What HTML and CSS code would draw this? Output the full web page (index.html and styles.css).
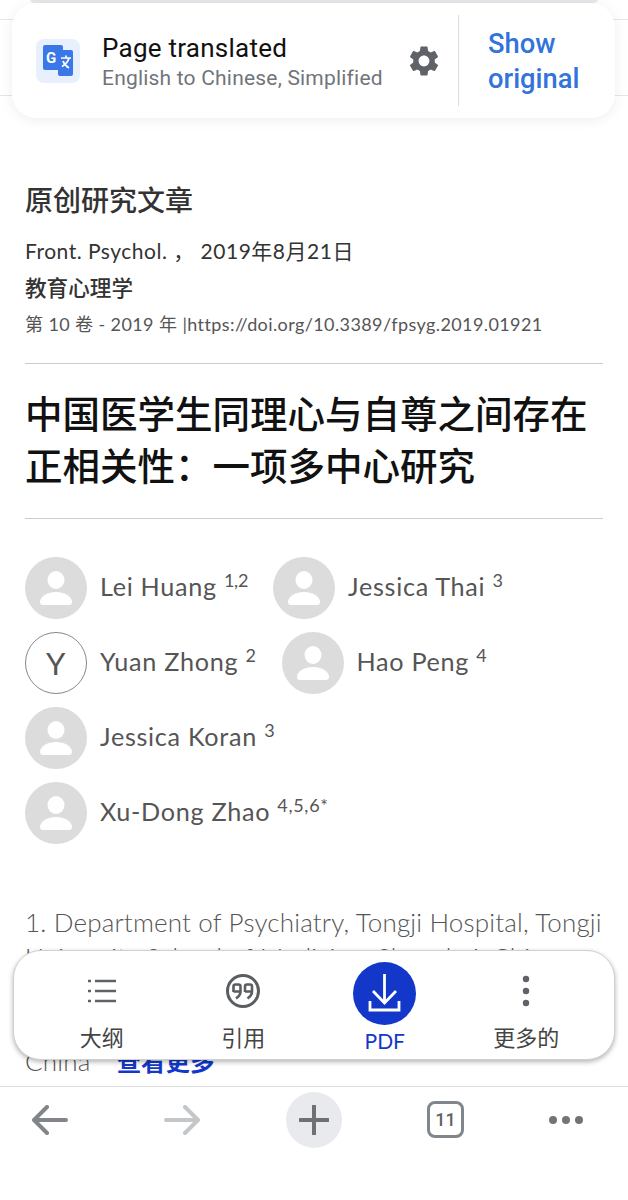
FILE: index.html
```html
<!DOCTYPE html>
<html lang="zh-CN">
<head>
    <meta charset="UTF-8">
    <meta name="viewport" content="width=device-width, initial-scale=1.0">
    <title>原创研究文章</title>
    <link rel="stylesheet" href="styles.css">
</head>
<body>
    <div class="page">
        <main class="article">
            <h2 class="kind">原创研究文章</h2>
            <p class="journal">Front. Psychol. ， 2019年8月21日</p>
            <p class="section">教育心理学</p>
            <p class="volume">第 10 卷 - 2019 年 |<a href="#">https://doi.org/10.3389/fpsyg.2019.01921</a></p>

            <h1 class="title">中国医学生同理心与自尊之间存在正相关性：一项多中心研究</h1>

            <ul class="authors">
                <li class="author">
                    <svg class="avatar" viewBox="0 0 62 62"><use href="#person"/></svg>
                    <span>Lei Huang <sup class="tight">1,2</sup></span>
                </li>
                <li class="author">
                    <svg class="avatar" viewBox="0 0 62 62"><use href="#person"/></svg>
                    <span>Jessica Thai <sup>3</sup></span>
                </li>
                <li class="author">
                    <div class="avatar initial">Y</div>
                    <span>Yuan Zhong <sup>2</sup></span>
                </li>
                <li class="author">
                    <svg class="avatar" viewBox="0 0 62 62"><use href="#person"/></svg>
                    <span>Hao Peng <sup>4</sup></span>
                </li>
                <li class="author">
                    <svg class="avatar" viewBox="0 0 62 62"><use href="#person"/></svg>
                    <span>Jessica Koran <sup>3</sup></span>
                </li>
                <li class="author">
                    <svg class="avatar" viewBox="0 0 62 62"><use href="#person"/></svg>
                    <span>Xu-Dong Zhao <sup>4,5,6*</sup></span>
                </li>
            </ul>

            <p class="affil">1. Department of Psychiatry, Tongji Hospital, Tongji<br>University School of Medicine, Shanghai, China<br><br><br>China <a class="more" href="#">查看更多</a></p>
        </main>

        <nav class="browser-bar">
            <svg class="bar-icon back" width="36" height="30" viewBox="0 0 36 30"><path d="M34 15H3M15 2 2 15l13 13" fill="none" stroke="#80868b" stroke-width="4" stroke-linecap="round" stroke-linejoin="round"/></svg>
            <svg class="bar-icon" width="36" height="30" viewBox="0 0 36 30"><path d="M2 15h31M21 2l13 13-13 13" fill="none" stroke="#c4c7c9" stroke-width="4" stroke-linecap="round" stroke-linejoin="round"/></svg>
            <div class="new-tab">
                <svg width="30" height="30" viewBox="0 0 30 30"><path d="M15 1v28M1 15h28" fill="none" stroke="#6d7175" stroke-width="4" stroke-linecap="round"/></svg>
            </div>
            <div class="tab-count">11</div>
            <div class="dots"><i></i><i></i><i></i></div>
        </nav>

        <div class="behind-bar"></div>
        <div class="behind-box"></div>

        <section class="translate-card">
            <svg class="translate-icon" width="44" height="44" viewBox="0 0 44 44">
                <rect x="7" y="6" width="20" height="25" rx="2" fill="#3b78e7"/>
                <rect x="22" y="11" width="15" height="26" rx="2" fill="#3b78e7"/>
                <path d="M25 19h10M30 16.500v2.500M33 19c-1 4-3.500 6.500-7 8.500M27 22c1 3 3.500 5.500 6 7" fill="none" stroke="#fff" stroke-width="1.700"/>
                <text class="translate-g" x="10" y="24">G</text>
            </svg>
            <div class="translate-text">
                <div class="translate-title">Page translated</div>
                <div class="translate-sub">English to Chinese, Simplified</div>
            </div>
            <svg class="gear" width="36" height="36" viewBox="0 0 24 24"><path fill="#5f6368" d="M19.14 12.94c.04-.3.06-.61.06-.94 0-.32-.02-.64-.07-.94l2.03-1.58c.18-.14.23-.41.12-.61l-1.92-3.32c-.12-.22-.37-.29-.59-.22l-2.39.96c-.5-.38-1.03-.7-1.62-.94l-.36-2.54c-.04-.24-.24-.41-.48-.41h-3.84c-.24 0-.43.17-.47.41l-.36 2.54c-.59.24-1.13.57-1.62.94l-2.39-.96c-.22-.08-.47 0-.59.22L2.74 8.87c-.12.21-.08.47.12.61l2.03 1.58c-.05.3-.09.63-.09.94s.02.64.07.94l-2.03 1.58c-.18.14-.23.41-.12.61l1.92 3.32c.12.22.37.29.59.22l2.39-.96c.5.38 1.03.7 1.62.94l.36 2.54c.05.24.24.41.48.41h3.84c.24 0 .44-.17.47-.41l.36-2.54c.59-.24 1.13-.56 1.62-.94l2.39.96c.22.08.47 0 .59-.22l1.92-3.32c.12-.22.07-.47-.12-.61l-2.01-1.58zM12 15.6c-1.98 0-3.6-1.62-3.6-3.6s1.62-3.6 3.6-3.6 3.6 1.62 3.6 3.6-1.62 3.6-3.6 3.6z"/></svg>
            <a class="show-original" href="#">Show original</a>
        </section>

        <section class="action-bar">
            <div class="action">
                <div class="action-icon">
                    <svg width="30" height="26" viewBox="0 0 30 26"><path d="M8 3h21M8 13h21M8 23h21" fill="none" stroke="#5f6368" stroke-width="2.6"/><path d="M1 3h3M1 13h3M1 23h3" fill="none" stroke="#5f6368" stroke-width="2.6"/></svg>
                </div>
                <span>大纲</span>
            </div>
            <div class="action">
                <div class="action-icon">
                    <svg width="36" height="36" viewBox="0 0 36 36">
                        <circle cx="18" cy="18" r="15.5" fill="none" stroke="#5a5e62" stroke-width="3"/>
                        <path d="M8.500 19v-5.500q0-2 2-2h3q2 0 2 2v5q0 4-4.500 7M8.500 18.500h7" fill="none" stroke="#5a5e62" stroke-width="2.600"/>
                        <path d="M20 19v-5.500q0-2 2-2h3q2 0 2 2v5q0 4-4.500 7M20 18.500h7" fill="none" stroke="#5a5e62" stroke-width="2.600"/>
                    </svg>
                </div>
                <span>引用</span>
            </div>
            <div class="action action-pdf">
                <div class="pdf-circle">
                    <svg width="63" height="63" viewBox="0 0 63 63"><path d="M31.500 12v29M20 29l11.500 12L43 29M17 39v9h29v-9" fill="none" stroke="#fff" stroke-width="2.800"/></svg>
                </div>
                <span>PDF</span>
            </div>
            <div class="action">
                <div class="action-icon">
                    <svg width="10" height="32" viewBox="0 0 10 32"><circle cx="5" cy="4" r="3.200" fill="#5f6368"/><circle cx="5" cy="16" r="3.200" fill="#5f6368"/><circle cx="5" cy="28" r="3.200" fill="#5f6368"/></svg>
                </div>
                <span>更多的</span>
            </div>
        </section>
    </div>

    <svg class="defs" width="0" height="0">
        <defs>
            <g id="person">
                <circle cx="31" cy="31" r="31" fill="#dcdcdc"/>
                <ellipse cx="31" cy="23" rx="8.500" ry="9" fill="#fff"/>
                <path d="M15 45c0-6 8-10 16-10s16 4 16 10c0 2-1 3-3 3H18c-2 0-3-1-3-3z" fill="#fff"/>
            </g>
        </defs>
    </svg>
</body>
</html>
```

FILE: styles.css
```css
* {
    box-sizing: border-box;
}

body {
    margin: 0;
    background-color: #fff;
    font-family: Lato, "Noto Sans CJK SC", sans-serif;
    color: #333;
}

a {
    text-decoration: none;
    color: inherit;
}

.defs {
    position: absolute;
}

.page {
    position: relative;
    width: 628px;
    height: 1200px;
    overflow: hidden;
    display: flex;
    flex-direction: column;
}

.article {
    height: 1086px;
    overflow: hidden;
    padding: 182px 25px 0;
}

.kind {
    margin: 0;
    font-size: 28px;
    line-height: 36px;
    font-weight: 500;
    color: #333;
}

.journal {
    margin: 18px 0 0;
    font-size: 21px;
    line-height: 30px;
    letter-spacing: 0.5px;
    color: #333;
}

.section {
    margin: 7px 0 0;
    font-size: 21.6px;
    line-height: 30px;
    font-weight: 500;
    color: #333;
}

.volume {
    margin: 6px 0 0;
    padding-bottom: 24px;
    font-size: 18px;
    line-height: 30px;
    letter-spacing: 0.4px;
    color: #555;
    border-bottom: 1px solid #ccc;
}

.title {
    margin: 0;
    padding: 24px 0 26px;
    font-size: 37.5px;
    line-height: 52px;
    font-weight: 500;
    color: #111;
    border-bottom: 1px solid #ccc;
}

.authors {
    list-style: none;
    margin: 38px 0 0;
    padding: 0 10px 0 0;
    display: flex;
    flex-wrap: wrap;
    column-gap: 25px;
    row-gap: 13px;
}

.author {
    display: flex;
    align-items: center;
    gap: 13px;
    font-size: 25.2px;
    letter-spacing: 0.7px;
    color: #555;
}

.author span {
    padding-bottom: 4px;
}

.author sup {
    font-size: 18px;
    line-height: 0;
}

.author sup.tight {
    letter-spacing: -0.3px;
}

.avatar {
    flex: none;
    width: 62px;
    height: 62px;
}

.initial {
    display: flex;
    align-items: center;
    justify-content: center;
    border: 1px solid #888;
    border-radius: 50%;
    font-size: 31px;
    color: #555;
}

.affil {
    margin: 61px 0 0;
    font-size: 26px;
    line-height: 34.75px;
    letter-spacing: 0.17px;
    font-weight: 300;
    white-space: nowrap;
    color: #555;
}

.more {
    margin-left: 19px;
    font-size: 24.5px;
    font-weight: 700;
    letter-spacing: 0;
    color: #1338c9;
}

.browser-bar {
    height: 114px;
    border-top: 1px solid #ddd;
    padding: 5px 0 0 32px;
    display: flex;
    align-items: flex-start;
    gap: 86px;
}

.bar-icon {
    margin-top: 13px;
}

.back {
    margin-right: 10px;
}

.new-tab {
    width: 56px;
    height: 56px;
    border-radius: 50%;
    background-color: #e8eaed;
    display: flex;
    align-items: center;
    justify-content: center;
}

.tab-count {
    margin: 9px 0 0 -1px;
    width: 37px;
    height: 37px;
    border: 3.5px solid #80868b;
    border-radius: 8px;
    display: flex;
    align-items: center;
    justify-content: center;
    font-family: Roboto, sans-serif;
    font-size: 18px;
    font-weight: 500;
    color: #5f6368;
}

.dots {
    margin: 24px 0 0 -1px;
    display: flex;
    gap: 5px;
}

.dots i {
    width: 8px;
    height: 8px;
    border-radius: 50%;
    background-color: #70757a;
}

.behind-bar {
    position: absolute;
    left: 30px;
    top: -6px;
    width: 568px;
    height: 9px;
    border-radius: 8px;
    background-color: #e8e8ec;
}

.behind-box {
    position: absolute;
    left: 0;
    top: 19px;
    width: 628px;
    height: 77px;
    border-top: 1px solid #e6e6e6;
    border-bottom: 1px solid #e6e6e6;
}

.translate-card {
    position: absolute;
    left: 12px;
    top: 3px;
    width: 603px;
    height: 115px;
    padding: 12px 0 12px 24px;
    display: flex;
    align-items: center;
    background-color: #fff;
    border-radius: 24px;
    box-shadow: 0 2px 14px rgba(0, 0, 0, 0.07);
    font-family: Roboto, sans-serif;
}

.translate-icon {
    flex: none;
    border-radius: 8px;
    background-color: #e8f0fe;
}

.translate-g {
    font-family: Roboto, sans-serif;
    font-size: 15px;
    font-weight: 700;
    fill: #fff;
}

.translate-text {
    flex: 1;
    margin-left: 22px;
}

.translate-title {
    margin-top: 1px;
    font-size: 26px;
    line-height: 32px;
    letter-spacing: 0.25px;
    color: #111;
}

.translate-sub {
    margin-top: 1px;
    font-size: 21px;
    line-height: 26px;
    letter-spacing: 0.2px;
    color: #70757a;
}

.gear {
    flex: none;
    margin-right: 16px;
}

.show-original {
    flex: none;
    align-self: stretch;
    width: 157px;
    padding: 12px 28px 0 29px;
    border-left: 1px solid #ddd;
    font-size: 27.3px;
    line-height: 35px;
    font-weight: 500;
    color: #3273dc;
}

.action-bar {
    position: absolute;
    left: 13px;
    top: 950px;
    width: 602px;
    height: 110px;
    padding: 0 17px;
    display: grid;
    grid-template-columns: repeat(4, 1fr);
    background-color: #fff;
    border: 1px solid #d0d0d0;
    border-radius: 28px;
    box-shadow: 0 2px 5px rgba(0, 0, 0, 0.3);
}

.action {
    display: flex;
    flex-direction: column;
    align-items: center;
    font-size: 22px;
    line-height: 30px;
    color: #444;
}

.action-icon {
    height: 80px;
    margin-bottom: -8px;
    display: flex;
    align-items: center;
    justify-content: center;
}

.action-pdf {
    font-size: 21px;
    color: #1338c9;
}

.pdf-circle {
    width: 63px;
    height: 63px;
    margin: 11px 0 1px;
    border-radius: 50%;
    background-color: #1338c9;
}
```
